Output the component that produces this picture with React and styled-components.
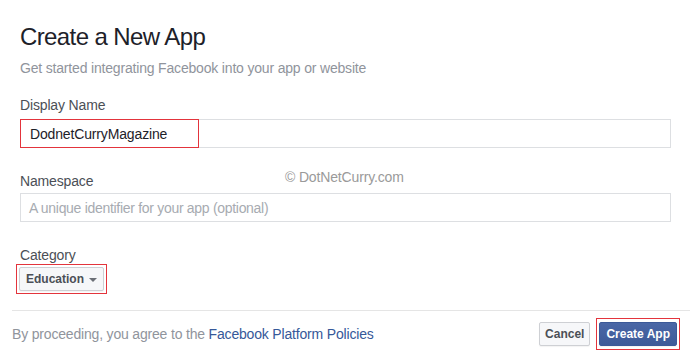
import styled, { createGlobalStyle } from "styled-components"

const Global = createGlobalStyle`
    html, body {
        margin: 0;
        padding: 0;
        background: #ffffff;
    }
    body {
        font-family: "Liberation Sans", Arial, Helvetica, sans-serif;
        -webkit-font-smoothing: antialiased;
    }
`

export default function App() {
    return (
        <Dialog>
            <Global />
            <Body>
                <Title>Create a New App</Title>
                <Subtitle>Get started integrating Facebook into your app or website</Subtitle>

                <Label $top={19}>Display Name</Label>
                <Field $top={5}>
                    <Marked>DodnetCurryMagazine</Marked>
                </Field>

                <Label $top={24}>Namespace</Label>
                <Field $top={3}>
                    <Placeholder>A unique identifier for your app (optional)</Placeholder>
                </Field>

                <Label $top={24}>Category</Label>
                <Outline $padX={2} $padY={2} $left={-4}>
                    <Button>
                        Education
                        <Caret />
                    </Button>
                </Outline>
            </Body>

            <Footer>
                <Notice>
                    By proceeding, you agree to the <Link>Facebook Platform Policies</Link>
                </Notice>
                <Actions>
                    <Button $pad={5}>Cancel</Button>
                    <Outline $padX={2} $padY={3}>
                        <Button $primary>Create App</Button>
                    </Outline>
                </Actions>
            </Footer>

            <Watermark>© DotNetCurry.com</Watermark>
        </Dialog>
    )
}

const Dialog = styled.div`
    position: relative;
    width: 690px;
    height: 352px;
    padding-left: 12px;
    box-sizing: border-box;
    overflow: hidden;
`
const Body = styled.div`
    display: flex;
    flex-direction: column;
    align-items: flex-start;
    padding: 23px 19px 16px 8px;
    border-bottom: 1px solid #e5e5e5;
`
const Title = styled.h1`
    margin: 0;
    font-size: 24px;
    line-height: 28px;
    font-weight: normal;
    letter-spacing: -0.6px;
    color: #1d2129;
`
const Subtitle = styled.p`
    margin: 8px 0 0;
    font-size: 14px;
    line-height: 18px;
    letter-spacing: -0.18px;
    color: #90949c;
`
const Label = styled.div`
    margin-top: ${p => p.$top}px;
    font-size: 14px;
    line-height: 18px;
    letter-spacing: -0.15px;
    color: #4b4f56;
`
const Field = styled.div`
    box-sizing: border-box;
    width: 100%;
    height: 29px;
    margin-top: ${p => p.$top}px;
    border: 1px solid #dddfe2;
    display: flex;
    align-items: center;
    font-size: 14px;
    letter-spacing: -0.15px;
    color: #1d2129;
`
const Marked = styled.span`
    box-sizing: border-box;
    align-self: stretch;
    width: 179px;
    margin: -1px;
    padding-left: 9px;
    display: flex;
    align-items: center;
    border: 1px solid #e3343c;
`
const Placeholder = styled.span`
    padding-left: 8px;
    color: #a7abb1;
    letter-spacing: -0.3px;
`
const Outline = styled.div`
    display: inline-flex;
    margin-top: 0;
    margin-left: ${p => p.$left || 0}px;
    padding: ${p => p.$padY}px ${p => p.$padX}px;
    border: 1px solid #e3343c;
`
const Button = styled.button`
    box-sizing: border-box;
    height: 24px;
    padding: 0 ${p => p.$pad || 6}px;
    display: inline-flex;
    align-items: center;
    gap: 5px;
    font-family: "Liberation Sans", Arial, sans-serif;
    font-size: 12px;
    font-weight: bold;
    border-radius: 2px;
    border: 1px solid ${p => p.$primary ? "#3b5998" : "#ced0d4"};
    background: ${p => p.$primary ? "linear-gradient(#4a67a6, #3d5a98)" : "#f6f7f9"};
    color: ${p => p.$primary ? "#ffffff" : "#4b4f56"};
    box-shadow: 0 1px 1px rgba(0, 0, 0, 0.05);
`
const Caret = styled.span`
    width: 0;
    height: 0;
    border-left: 4px solid transparent;
    border-right: 4px solid transparent;
    border-top: 4px solid #6b6f76;
    margin-top: 1px;
`
const Footer = styled.div`
    display: flex;
    align-items: center;
    justify-content: space-between;
    padding: 7px 10px 0 0;
`
const Notice = styled.div`
    font-size: 14px;
    line-height: 18px;
    letter-spacing: -0.18px;
    color: #90949c;
`
const Link = styled.span`
    color: #365899;
`
const Actions = styled.div`
    display: flex;
    align-items: center;
    gap: 6px;
`
const Watermark = styled.div`
    position: absolute;
    left: 285px;
    top: 168px;
    font-size: 14px;
    line-height: 18px;
    letter-spacing: -0.15px;
    color: #9a9a9a;
`
